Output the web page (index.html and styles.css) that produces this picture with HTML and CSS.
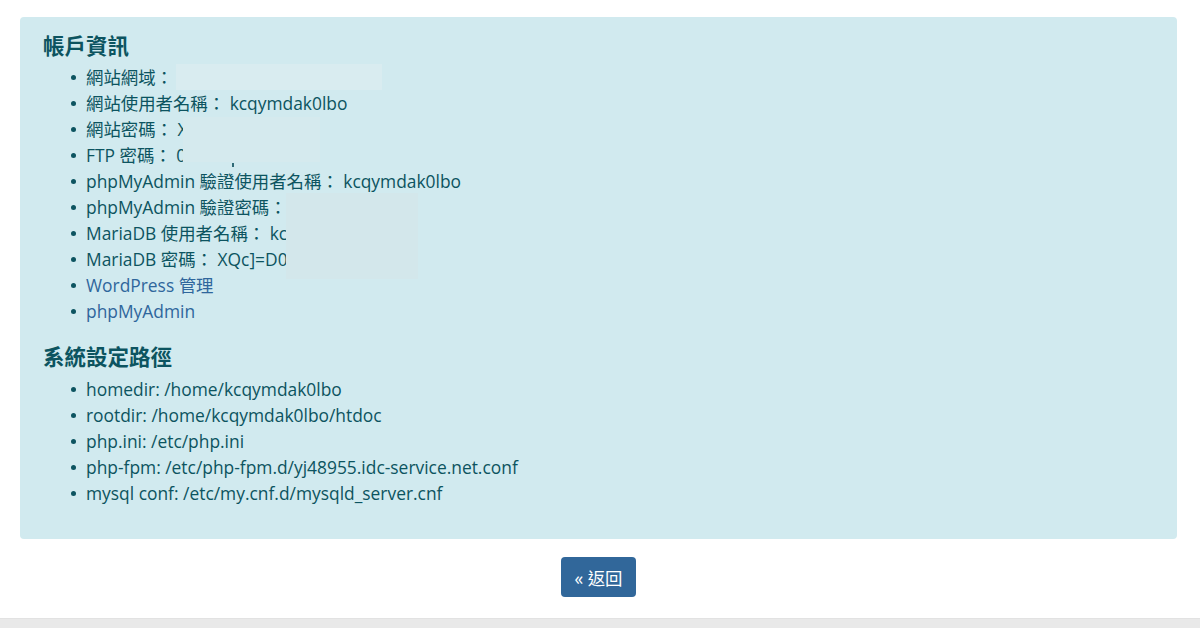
FILE: index.html
```html
<!DOCTYPE html>
<html lang="zh-Hant">
  <head>
    <meta charset="UTF-8" />
    <title>帳戶資訊</title>
    <link rel="stylesheet" href="styles.css">
  </head>
  <body>
    <div class="page">
      <div class="info-box">
        <h3>帳戶資訊</h3>
        <ul>
          <li>網站網域： yj48955.idc-service.net<span class="mask mask-domain"></span></li>
          <li>網站使用者名稱： kcqymdak0lbo</li>
          <li>網站密碼： Xk7pQ2wLm9<span class="mask mask-pass"></span><span class="tick"></span></li>
          <li>FTP 密碼： 0aT4vR8nS</li>
          <li>phpMyAdmin 驗證使用者名稱： kcqymdak0lbo</li>
          <li>phpMyAdmin 驗證密碼： Rt5yUe3w<span class="mask mask-db"></span></li>
          <li>MariaDB 使用者名稱： kcqymdak0lbo</li>
          <li>MariaDB 密碼： XQc]=D0hy2</li>
          <li><a href="#">WordPress 管理</a></li>
          <li><a href="#">phpMyAdmin</a></li>
        </ul>

        <h3>系統設定路徑</h3>
        <ul class="paths">
          <li>homedir: /home/kcqymdak0lbo</li>
          <li>rootdir: /home/kcqymdak0lbo/htdoc</li>
          <li>php.ini: /etc/php.ini</li>
          <li>php-fpm: /etc/php-fpm.d/yj48955.idc-service.net.conf</li>
          <li>mysql conf: /etc/my.cnf.d/mysqld_server.cnf</li>
        </ul>
      </div>

      <div class="actions">
        <button class="back">« 返回</button>
      </div>
    </div>
    <div class="footer"></div>
  </body>
</html>
```

FILE: styles.css
```css
* {
  box-sizing: border-box;
}
body {
  margin: 0;
  background: #fff;
  font-family: "Open Sans", "Noto Sans CJK TC", sans-serif;
  font-size: 17.4px;
  color: #0c5460;
}
.page {
  padding: 17px 23px 0 20px;
}
.info-box {
  background-color: #d1eaef;
  border-radius: 4px;
  padding: 17px 23px 23px 23px;
}
h3 {
  margin: 0;
  font-size: 21.5px;
  line-height: 24px;
  font-weight: bold;
  color: #0c5460;
}
ul {
  margin: 6px 0 0 0;
  padding-left: 43px;
  list-style: none;
}
ul + h3 {
  margin-top: 21px;
}
ul.paths {
  margin-top: 7px;
  margin-bottom: 10px;
}
li {
  line-height: 26px;
  position: relative;
}
li::before {
  content: "";
  position: absolute;
  left: -15px;
  top: 11px;
  width: 5px;
  height: 5px;
  border-radius: 50%;
  background-color: #0c5460;
}
a {
  color: #2f669c;
  text-decoration: none;
}
.mask {
  position: absolute;
  z-index: 1;
  background-color: #d9ecf0;
}
.mask-domain {
  left: 90px;
  top: 0;
  width: 206px;
  height: 26px;
}
.mask-pass {
  left: 97px;
  top: 1px;
  width: 137px;
  height: 45px;
  background-color: #d5eaee;
}
.tick {
  position: absolute;
  z-index: 2;
  left: 146px;
  top: 47px;
  width: 2px;
  height: 4px;
  background-color: #2f6a76;
}
.mask-db {
  left: 200px;
  top: -1px;
  width: 132px;
  height: 86px;
  background-color: #d3e7eb;
}
.actions {
  display: flex;
  justify-content: center;
  margin-top: 18px;
}
.back {
  height: 40px;
  width: 75px;
  padding: 0;
  border: none;
  border-radius: 4px;
  background-color: #31679a;
  color: #fff;
  font-family: "Open Sans", "Noto Sans CJK TC", sans-serif;
  font-size: 17.4px;
}
.footer {
  margin-top: 21px;
  height: 11px;
  background-color: #e9e9e9;
  border-top: 1px solid #e2e2e2;
}
```
